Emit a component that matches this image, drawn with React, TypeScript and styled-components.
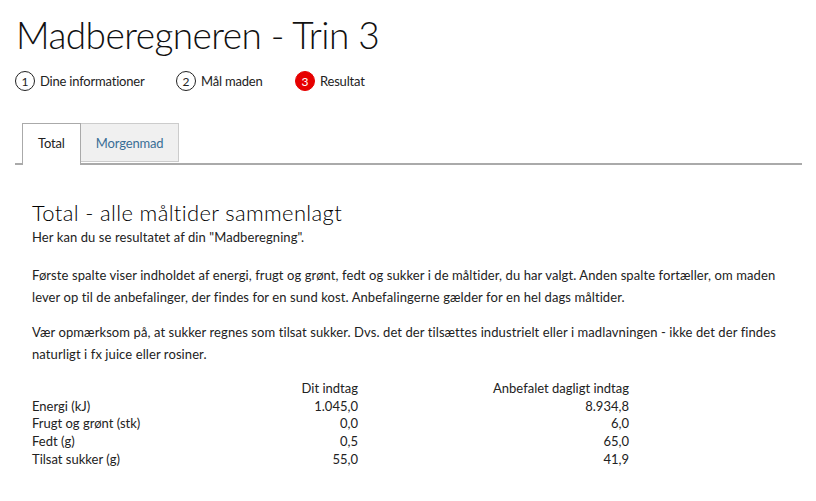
import React from "react";
import styled, { createGlobalStyle } from "styled-components";

const Global = createGlobalStyle`
  html, body { margin: 0; padding: 0; background: #fff; }
  body { font-family: Lato, "Liberation Sans", sans-serif; color: #222; }
`;

const Page = styled.div`
  width: 816px;
  height: 501px;
  overflow: hidden;
  padding: 12px 14px 0 15px;
  box-sizing: border-box;
`;

const Title = styled.h1`
  margin: 0 0 0 1px;
  font-size: 37px;
  font-weight: 300;
  letter-spacing: -0.55px;
  line-height: 46px;
  color: #111;
`;

const Steps = styled.div`
  display: flex;
  align-items: center;
  margin-top: 12px;
  height: 22px;
`;

const Step = styled.div<{ $w: number }>`
  display: flex;
  align-items: center;
  gap: 5px;
  width: ${(p) => p.$w}px;
  font-size: 13px;
  letter-spacing: -0.2px;
  color: #222;
`;

const Circle = styled.span<{ $active?: boolean }>`
  width: 20px;
  height: 20px;
  box-sizing: border-box;
  border-radius: 50%;
  border: 1px solid ${(p) => (p.$active ? "#e60000" : "#222")};
  background: ${(p) => (p.$active ? "#e60000" : "transparent")};
  color: ${(p) => (p.$active ? "#fff" : "#222")};
  display: flex;
  align-items: center;
  justify-content: center;
  font-size: 12px;
  letter-spacing: 0;
`;

const TabBar = styled.div`
  display: flex;
  margin-top: 31px;
  padding-left: 7px;
  border-bottom: 2px solid #aaa;
  height: 40px;
  width: 780px;
  box-sizing: content-box;
`;

const Tab = styled.div<{ $active?: boolean }>`
  box-sizing: border-box;
  height: ${(p) => (p.$active ? "42px" : "39px")};
  margin-bottom: ${(p) => (p.$active ? "-2px" : "0")};
  padding: 0 15px;
  padding-bottom: ${(p) => (p.$active ? "3px" : "0")};
  display: flex;
  align-items: center;
  justify-content: center;
  font-size: 13px;
  letter-spacing: -0.15px;
  background: ${(p) => (p.$active ? "#fff" : "#f0f0f0")};
  color: ${(p) => (p.$active ? "#222" : "#3a6e96")};
  border: 1px solid ${(p) => (p.$active ? "#aaa" : "#ccc")};
  border-bottom: ${(p) => (p.$active ? "none" : "1px solid #ccc")};
  border-left: ${(p) => (p.$active ? "1px solid #aaa" : "none")};
`;

const Content = styled.div`
  padding: 35px 0 0 17px;
`;

const Heading = styled.h2`
  margin: 0;
  font-size: 22px;
  font-weight: 300;
  letter-spacing: 0.35px;
  line-height: 26px;
  color: #000;
`;

const Para = styled.p<{ $gap?: number }>`
  margin: 0 0 ${(p) => p.$gap ?? 13}px;
  font-size: 13px;
  line-height: 22px;
  letter-spacing: 0.09px;
  white-space: nowrap;
  color: #222;
`;

const Table = styled.div`
  display: grid;
  grid-template-columns: 200px 126px 271px;
  font-size: 13px;
  line-height: 17.7px;
  color: #222;
  margin-top: 15px;
`;

const Cell = styled.div<{ $right?: boolean }>`
  text-align: ${(p) => (p.$right ? "right" : "left")};
  white-space: nowrap;
`;

const rows: [string, string, string][] = [
  ["Energi (kJ)", "1.045,0", "8.934,8"],
  ["Frugt og grønt (stk)", "0,0", "6,0"],
  ["Fedt (g)", "0,5", "65,0"],
  ["Tilsat sukker (g)", "55,0", "41,9"],
];

export default function App() {
  return (
    <Page>
      <Global />
      <Title>Madberegneren - Trin 3</Title>
      <Steps>
        <Step $w={161}>
          <Circle>1</Circle>Dine informationer
        </Step>
        <Step $w={119}>
          <Circle>2</Circle>Mål maden
        </Step>
        <Step $w={100}>
          <Circle $active>3</Circle>Resultat
        </Step>
      </Steps>
      <TabBar>
        <Tab $active>Total</Tab>
        <Tab>Morgenmad</Tab>
      </TabBar>
      <Content>
        <Heading>Total - alle måltider sammenlagt</Heading>
        <Para $gap={16}>Her kan du se resultatet af din "Madberegning".</Para>
        <Para>
          Første spalte viser indholdet af energi, frugt og grønt, fedt og sukker i de måltider, du har valgt. Anden spalte fortæller, om maden
          <br />
          lever op til de anbefalinger, der findes for en sund kost. Anbefalingerne gælder for en hel dags måltider.
        </Para>
        <Para>
          Vær opmærksom på, at sukker regnes som tilsat sukker. Dvs. det der tilsættes industrielt eller i madlavningen - ikke det der findes
          <br />
          naturligt i fx juice eller rosiner.
        </Para>
        <Table>
          <Cell />
          <Cell $right>Dit indtag</Cell>
          <Cell $right>Anbefalet dagligt indtag</Cell>
          {rows.map((r) => (
            <React.Fragment key={r[0]}>
              <Cell>{r[0]}</Cell>
              <Cell $right>{r[1]}</Cell>
              <Cell $right>{r[2]}</Cell>
            </React.Fragment>
          ))}
        </Table>
      </Content>
    </Page>
  );
}
